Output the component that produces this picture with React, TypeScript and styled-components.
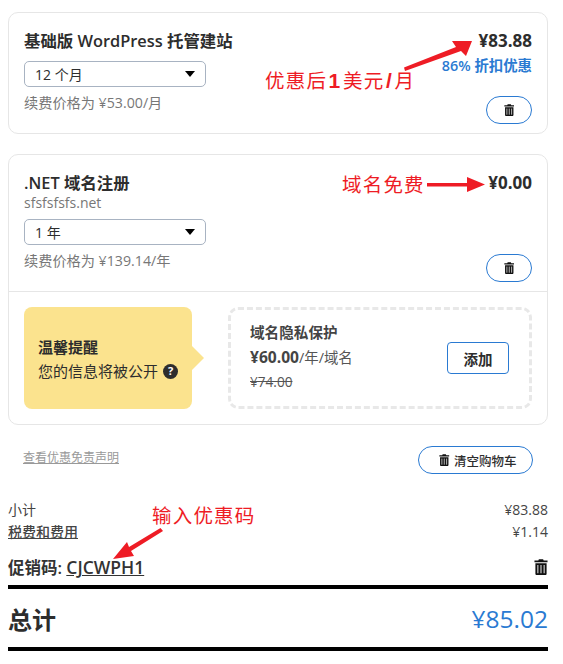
import React from "react";
import styled, { createGlobalStyle } from "styled-components";

const Global = createGlobalStyle`
  html, body { margin: 0; padding: 0; background: #fff; }
  body { font-family: "Open Sans", "Noto Sans CJK SC", sans-serif; color: #2d2d2d; }
  * { box-sizing: border-box; }
`;

const Page = styled.div`
  position: relative;
  width: 563px;
  height: 664px;
  padding: 12px 15px 0 8px;
  overflow: hidden;
`;

const Card = styled.section`
  border: 1px solid #e6e6e6;
  border-radius: 10px;
  background: #fff;
  & + & { margin-top: 20px; }
`;

const Item = styled.div<{ $h: number }>`
  height: ${(p) => p.$h}px;
  padding: 15px 15px 0 15px;
  display: flex;
  justify-content: space-between;
`;

const Left = styled.div`
  display: flex;
  flex-direction: column;
  align-items: flex-start;
`;

const Right = styled.div`
  display: flex;
  flex-direction: column;
  align-items: flex-end;
  height: 100%;
`;

const Title = styled.div`
  font-size: 16.4px;
  font-weight: 600;
  line-height: 26px;
  color: #2d2d2d;
`;

const Domain = styled.div`
  font-size: 14px;
  line-height: 14px;
  color: #777;
`;

const SelectBox = styled.div<{ $mt: number }>`
  width: 182px;
  height: 26px;
  margin-top: ${(p) => p.$mt}px;
  padding: 0 10px;
  border: 1px solid #a8b3c2;
  border-radius: 5px;
  display: flex;
  align-items: center;
  justify-content: space-between;
  font-size: 14px;
  color: #2d2d2d;
`;

const Caret = styled.span`
  width: 0;
  height: 0;
  border-left: 5.5px solid transparent;
  border-right: 5.5px solid transparent;
  border-top: 6px solid #000;
`;

const Renewal = styled.div`
  margin-top: 6px;
  font-size: 14.2px;
  line-height: 20px;
  color: #777;
`;

const Price = styled.div`
  font-size: 17px;
  font-weight: 700;
  line-height: 26px;
  color: #2d2d2d;
`;

const Discount = styled.div`
  font-size: 14.4px;
  font-weight: 600;
  line-height: 24px;
  color: #2a7ad2;
`;

const PillButton = styled.div`
  margin-top: auto;
  margin-bottom: 9px;
  width: 46px;
  height: 28px;
  border: 1px solid #2a7ad2;
  border-radius: 14px;
  display: flex;
  align-items: center;
  justify-content: center;
`;

const Extras = styled.div`
  border-top: 1px solid #e6e6e6;
  padding: 15px 15px 16px 15px;
  height: 133px;
  display: flex;
  align-items: stretch;
`;

const Notice = styled.div`
  position: relative;
  width: 168px;
  height: 102px;
  background: #fbe38e;
  border-radius: 8px;
  padding: 30px 0 0 14px;
  &::after {
    content: "";
    position: absolute;
    right: -12px;
    top: 39px;
    border-left: 12px solid #fbe38e;
    border-top: 12px solid transparent;
    border-bottom: 12px solid transparent;
  }
`;

const NoticeTitle = styled.div`
  font-size: 15px;
  font-weight: 600;
  line-height: 20px;
`;

const NoticeText = styled.div`
  margin-top: 4px;
  font-size: 15px;
  line-height: 20px;
  display: flex;
  align-items: center;
  gap: 5px;
  white-space: nowrap;
`;

const Help = styled.span`
  width: 15px;
  height: 15px;
  border-radius: 50%;
  background: #2d2d2d;
  color: #fff;
  font-size: 11px;
  font-weight: 700;
  display: inline-flex;
  align-items: center;
  justify-content: center;
`;

const Offer = styled.div`
  margin-left: 36px;
  width: 304px;
  height: 102px;
  border: 3px dashed #e8e8e8;
  border-radius: 10px;
  padding: 13px 20px 0 19px;
  display: flex;
  justify-content: space-between;
  align-items: center;
`;

const OfferBody = styled.div`
  align-self: flex-start;
  color: #444;
`;

const OfferTitle = styled.div`
  font-size: 14.6px;
  font-weight: 600;
  line-height: 20px;
  margin-top: -1px;
`;

const OfferPrice = styled.div`
  margin-top: 5px;
  font-size: 14.4px;
  line-height: 20px;
  color: #555;
  b { font-size: 15.6px; font-weight: 700; color: #444; }
`;

const OfferOld = styled.div`
  margin-top: 4px;
  font-size: 13.6px;
  line-height: 20px;
  color: #555;
  text-decoration: line-through;
`;

const AddButton = styled.div`
  width: 62px;
  height: 32px;
  margin-top: -13px;
  border: 1px solid #2a7ad2;
  border-radius: 4px;
  font-size: 14.5px;
  font-weight: 600;
  color: #2d2d2d;
  display: flex;
  align-items: center;
  justify-content: center;
`;

const ActionRow = styled.div`
  margin-top: 21px;
  padding: 0 15px;
  display: flex;
  justify-content: space-between;
  align-items: flex-start;
`;

const Disclaimer = styled.a`
  font-size: 12px;
  line-height: 24px;
  color: #999;
  text-decoration: underline;
`;

const ClearButton = styled.div`
  width: 115px;
  height: 28px;
  border: 1px solid #2a7ad2;
  border-radius: 14px;
  padding-left: 5px;
  display: flex;
  align-items: center;
  justify-content: center;
  gap: 4px;
  font-size: 12.5px;
  font-weight: 500;
  color: #2d2d2d;
`;

const Summary = styled.div`
  margin-top: 24px;
`;

const Row = styled.div`
  height: 22px;
  display: flex;
  align-items: center;
  justify-content: space-between;
  font-size: 14px;
  color: #444;
`;

const TaxLabel = styled.span`
  font-weight: 500;
  text-decoration: underline;
`;

const PromoRow = styled.div`
  height: 30px;
  margin-top: 10px;
  display: flex;
  align-items: center;
  justify-content: space-between;
  font-size: 16.5px;
  font-weight: 600;
  color: #333;
  u { font-size: 17.5px; font-weight: 600; }
`;

const TotalRow = styled.div`
  margin-top: 3px;
  height: 66px;
  border-top: 4px solid #000;
  border-bottom: 4px solid #000;
  display: flex;
  align-items: center;
  justify-content: space-between;
`;

const TotalLabel = styled.span`
  font-size: 24px;
  font-weight: 700;
`;

const TotalValue = styled.span`
  font-size: 24.5px;
  color: #2a7ad2;
`;

const Note = styled.div<{ $x: number; $y: number }>`
  position: absolute;
  left: ${(p) => p.$x}px;
  top: ${(p) => p.$y}px;
  font-family: "Noto Sans CJK SC", sans-serif;
  font-weight: 400;
  font-size: 19.5px;
  line-height: 24px;
  letter-spacing: 1.2px;
  color: #ee1c25;
  white-space: nowrap;
  b {
    font-family: "Liberation Sans", sans-serif;
    font-size: 21px;
    font-weight: 700;
    padding: 0 1.5px;
  }
`;

const Overlay = styled.svg`
  position: absolute;
  left: 0;
  top: 0;
  pointer-events: none;
`;

const Trash = ({ size = 10.5 }: { size?: number }) => (
  <svg width={size} height={size * 1.17} viewBox="0 0 12 14" aria-hidden="true">
    <path d="M4.2 0.3h3.6l.5 1H11.6v1.5H.4V1.3h3.3z" fill="#111" />
    <path d="M1.2 3.6h9.6v9a1.2 1.2 0 0 1-1.2 1.2H2.4a1.2 1.2 0 0 1-1.2-1.2z" fill="#111" />
    <path d="M3.3 5.2v7M6 5.2v7M8.7 5.2v7" stroke="#fff" strokeWidth="1" opacity=".8" />
  </svg>
);

export default function App() {
  return (
    <>
      <Global />
      <Page>
        <Card>
          <Item $h={120}>
            <Left>
              <Title>基础版 WordPress 托管建站</Title>
              <SelectBox $mt={7}>
                12 个月
                <Caret />
              </SelectBox>
              <Renewal>续费价格为 ¥53.00/月</Renewal>
            </Left>
            <Right>
              <Price>¥83.88</Price>
              <Discount>86% 折扣优惠</Discount>
              <PillButton>
                <Trash />
              </PillButton>
            </Right>
          </Item>
        </Card>
        <Card>
          <Item $h={136}>
            <Left>
              <Title>.NET 域名注册</Title>
              <Domain>sfsfsfsfs.net</Domain>
              <SelectBox $mt={9}>
                1 年
                <Caret />
              </SelectBox>
              <Renewal>续费价格为 ¥139.14/年</Renewal>
            </Left>
            <Right>
              <Price>¥0.00</Price>
              <PillButton>
                <Trash />
              </PillButton>
            </Right>
          </Item>
          <Extras>
            <Notice>
              <NoticeTitle>温馨提醒</NoticeTitle>
              <NoticeText>
                您的信息将被公开
                <Help>?</Help>
              </NoticeText>
            </Notice>
            <Offer>
              <OfferBody>
                <OfferTitle>域名隐私保护</OfferTitle>
                <OfferPrice>
                  <b>¥60.00</b>/年/域名
                </OfferPrice>
                <OfferOld>¥74.00</OfferOld>
              </OfferBody>
              <AddButton>添加</AddButton>
            </Offer>
          </Extras>
        </Card>
        <ActionRow>
          <Disclaimer>查看优惠免责声明</Disclaimer>
          <ClearButton>
            <Trash />
            清空购物车
          </ClearButton>
        </ActionRow>
        <Summary>
          <Row>
            <span>小计</span>
            <span>¥83.88</span>
          </Row>
          <Row>
            <TaxLabel>税费和费用</TaxLabel>
            <span>¥1.14</span>
          </Row>
          <PromoRow>
            <span>
              促销码: <u>CJCWPH1</u>
            </span>
            <Trash size={14} />
          </PromoRow>
          <TotalRow>
            <TotalLabel>总计</TotalLabel>
            <TotalValue>¥85.02</TotalValue>
          </TotalRow>
        </Summary>
        <Note $x={265} $y={68}>
          优惠后<b>1</b>美元<b>/</b>月
        </Note>
        <Note $x={342} $y={172}>
          域名免费
        </Note>
        <Note $x={152} $y={503}>
          输入优惠码
        </Note>
        <Overlay width="563" height="664" viewBox="0 0 563 664">
          <path d="M404 67.5L456 47L452 41L472 41L466 56L461 51L405 71z" fill="#ee1c25" />
          <path d="M427 183H467V177L485 184.500L467 192V186.500H427z" fill="#ee1c25" />
          <path d="M160.500 528L129 547L127 542L113 559L134 556L131 551L163 531z" fill="#ee1c25" />
        </Overlay>
      </Page>
    </>
  );
}
